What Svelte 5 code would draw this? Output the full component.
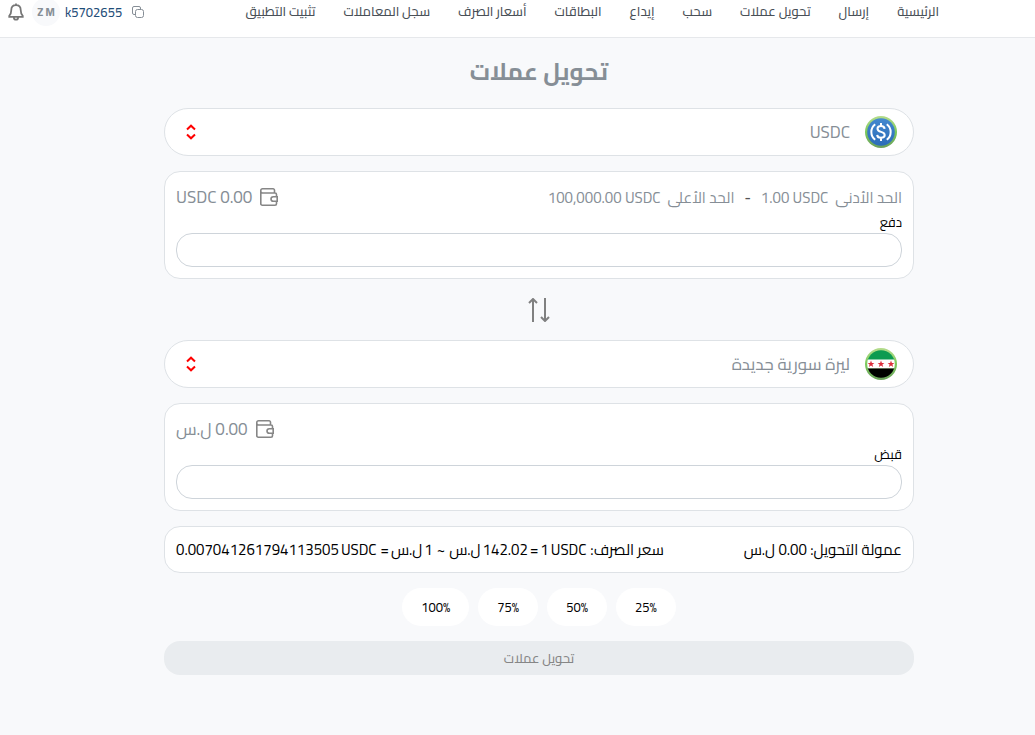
<script>
  const links = [
    'الرئيسية',
    'إرسال',
    'تحويل عملات',
    'سحب',
    'إيداع',
    'البطاقات',
    'أسعار الصرف',
    'سجل المعاملات',
    'تثبيت التطبيق',
  ];
  const shares = [25, 50, 75, 100];

  let from = $state('usdc');
  let to = $state('syp');
  let pay = $state('');
  let receive = $state('');

  const swap = () => {
    [from, to] = [to, from];
    [pay, receive] = [receive, pay];
  };
</script>

{#snippet coin(id, slot)}
  <svg class="coin" viewBox="0 0 32 32" aria-hidden="true">
    <defs>
      <linearGradient id="ring-{slot}" x1="0" y1="0" x2="0" y2="1">
        <stop offset="0" stop-color="#b5dc8d" />
        <stop offset="0.5" stop-color="#7cc95c" />
        <stop offset="1" stop-color="#6a9f5c" />
      </linearGradient>
      <linearGradient id="blue-{slot}" x1="0" y1="0" x2="0" y2="1">
        <stop offset="0" stop-color="#4489cf" />
        <stop offset="1" stop-color="#2b6cb8" />
      </linearGradient>
      <clipPath id="disc-{slot}"><circle cx="16" cy="16" r="13.8" /></clipPath>
    </defs>
    <circle cx="16" cy="16" r="16" fill="url(#ring-{slot})" />
    {#if id === 'usdc'}
      <circle cx="16" cy="16" r="13.8" fill="url(#blue-{slot})" />
      <g fill="none" stroke="#fff" stroke-width="2">
        <path d="M10.200 8.200a9.800 9.800 0 0 0 0 15.600M21.800 8.200a9.800 9.800 0 0 1 0 15.600" />
        <path d="M19.600 12.800c-.2-1.900-1.600-2.700-3.600-2.700s-3.500.9-3.500 2.700c0 4.300 7.200 1.900 7.200 6.200 0 1.900-1.600 2.800-3.700 2.800-2.200 0-3.700-1-3.800-2.900M16 7v3M16 21.800v3.200" />
      </g>
    {:else}
      <g clip-path="url(#disc-{slot})">
        <path d="M0 0h32v12H0z" fill="#0c9b50" />
        <path d="M0 11.500h32v9H0z" fill="#fff" />
        <path d="M0 20.500h32V32H0z" fill="#000" />
        {#each [6, 16, 26] as x}
          <path
            transform="translate({x} 16)"
            d="M0-3.400 .9-1h2.500L1.400.6l.8 2.500L0 1.600l-2.200 1.500.8-2.500L-3.400-1h2.500z"
            fill="#dc2f3c"
          />
        {/each}
      </g>
    {/if}
  </svg>
{/snippet}

{#snippet chevrons()}
  <svg class="chevrons" viewBox="0 0 12 16" aria-hidden="true">
    <path d="M2 5.500 6 1.700l4 3.800M2 10.500l4 3.800 4-3.800" />
  </svg>
{/snippet}

{#snippet wallet()}
  <svg class="wallet" viewBox="0 0 18 18" aria-hidden="true">
    <path d="M14.500 5V2.200A1.400 1.400 0 0 0 13.100.8H2.500A1.700 1.700 0 0 0 .8 2.500v13.200A1.500 1.500 0 0 0 2.300 17.200H15a1.500 1.500 0 0 0 1.500-1.500V13.500M.8 3.200A1.800 1.800 0 0 0 2.600 5H15a1.500 1.500 0 0 1 1.500 1.500V8.500M17.200 8.700H13.300a2.300 2.300 0 0 0 0 4.600H17.200z" />
  </svg>
{/snippet}

<header>
  <nav>
    {#each links as link}
      <a href="#top">{link}</a>
    {/each}
  </nav>
  <div class="account">
    <button aria-label="نسخ">
      <svg class="copy" viewBox="0 0 12 12" aria-hidden="true">
        <rect x="3.500" y="3.500" width="8" height="8" rx="2" />
        <path d="M8.500 3.500V2a1.500 1.500 0 0 0-1.500-1.500H2A1.500 1.500 0 0 0 .5 2v5A1.500 1.500 0 0 0 2 8.500h1.500" />
      </svg>
    </button>
    <span class="user">k5702655</span>
    <span class="avatar">Z M</span>
    <button aria-label="الإشعارات">
      <svg class="bell" viewBox="0 0 18 20" aria-hidden="true">
        <path d="M9 2.300c-3.300 0-5.300 2.400-5.300 5.500 0 4.200-1 5.300-2.300 6.500v1.200h15.200v-1.200c-1.300-1.200-2.300-2.300-2.300-6.500 0-3.100-2-5.500-5.300-5.500zM9 .5v1.800M6.500 16c.2 1.700 1.200 2.700 2.500 2.700s2.300-1 2.500-2.700" />
      </svg>
    </button>
  </div>
</header>

<main>
  <h1>تحويل عملات</h1>

  <div class="picker">
    {@render coin(from, 'from')}
    <select bind:value={from} aria-label="من عملة">
      <option value="usdc">USDC</option>
      <option value="syp">ليرة سورية جديدة</option>
    </select>
    {@render chevrons()}
  </div>

  <section class="card">
    <div class="info">
      <p class="limits">
        <span>الحد الأدنى</span>
        <bdi>1.00 USDC</bdi>
        <span class="dash">-</span>
        <span>الحد الأعلى</span>
        <bdi>100,000.00 USDC</bdi>
      </p>
      <p class="balance">{@render wallet()}<span>0.00 USDC</span></p>
    </div>
    <label for="pay">دفع</label>
    <input id="pay" type="text" inputmode="decimal" bind:value={pay} />
  </section>

  <button class="swap" aria-label="تبديل" onclick={swap}>
    <svg viewBox="0 0 22 24" aria-hidden="true">
      <path d="M5 24V1M1 5l4-4 4 4M17 0v23M13 19l4 4 4-4" />
    </svg>
  </button>

  <div class="picker">
    {@render coin(to, 'to')}
    <select bind:value={to} aria-label="إلى عملة">
      <option value="usdc">USDC</option>
      <option value="syp">ليرة سورية جديدة</option>
    </select>
    {@render chevrons()}
  </div>

  <section class="card">
    <div class="info">
      <p class="balance last">{@render wallet()}<span>0.00 ل.س</span></p>
    </div>
    <label for="receive">قبض</label>
    <input id="receive" type="text" inputmode="decimal" bind:value={receive} />
  </section>

  <section class="card rates">
    <p>عمولة التحويل: 0.00 ل.س</p>
    <!-- each piece is its own flex item so the bidi order stays put -->
    <p class="rate">
      <span>سعر الصرف:</span>
      <bdi class="amount"><span>1</span><span>USDC</span></bdi>
      <span>=</span>
      <span>142.02</span>
      <span>ل.س</span>
      <span class="about">~</span>
      <span>1</span>
      <span>ل.س</span>
      <span>=</span>
      <bdi class="amount"><span>0.007041261794113505</span><span>USDC</span></bdi>
    </p>
  </section>

  <div class="shares">
    {#each shares as share}
      <button dir="ltr">{share}%</button>
    {/each}
  </div>

  <button class="submit" disabled>تحويل عملات</button>
</main>

<style>
  :global(body) {
    background: #f8f9fb;
    color: #000;
    direction: rtl;
    font-family: Cairo, Roboto, 'DejaVu Sans', sans-serif;
    font-size: 15px;
  }

  p, h1 { margin: 0; }

  button {
    border: 0;
    padding: 0;
    background: none;
    font-family: inherit;
    cursor: pointer;
  }

  svg {
    display: block;
    flex: none;
    fill: none;
  }

  header {
    display: flex;
    justify-content: space-between;
    padding: 0 96px 13px 8px;
    border-bottom: 1px solid #e6e8eb;
    background: #fff;
  }

  nav {
    display: flex;
    gap: 28px;
  }
  nav a {
    color: #495057;
    font-size: 13px;
    font-weight: 500;
    line-height: 22px;
    text-decoration: none;
    white-space: nowrap;
  }

  .account {
    display: flex;
    align-items: center;
    height: 24px;
  }
  .user {
    margin: 0 10px 0 5px;
    color: #1f4e79;
    font-size: 13px;
    font-weight: 500;
  }
  .avatar {
    display: grid;
    place-items: center;
    width: 28px;
    height: 28px;
    margin-left: 8px;
    border-radius: 50%;
    background: #f8f9fb;
    color: #868e96;
    font-size: 11px;
    font-weight: 700;
  }
  .copy {
    width: 12px;
    height: 12px;
    stroke: #868e96;
  }
  .bell {
    width: 16px;
    height: 20px;
    stroke: #777;
    stroke-width: 2;
  }

  main {
    display: flex;
    flex-direction: column;
    gap: 15px;
    padding: 15px 121px 60px 164px;
  }

  h1 {
    padding-bottom: 2px;
    color: #868e96;
    font-size: 24px;
    font-weight: 700;
    line-height: 38px;
    text-align: center;
  }

  .picker, .card {
    box-sizing: border-box;
    border: 1px solid #dee2e6;
    background: #fff;
  }

  .picker {
    display: flex;
    align-items: center;
    gap: 15px;
    height: 48px;
    padding: 0 16px 0 20px;
    border-radius: 24px;
  }
  .picker select {
    flex: 1;
    height: 40px;
    border: 0;
    padding: 0;
    appearance: none;
    background: none;
    color: #868e96;
    font-family: inherit;
    font-size: 17px;
  }
  .coin {
    width: 32px;
    height: 32px;
  }
  .chevrons {
    width: 12px;
    height: 16px;
    stroke: #f00;
    stroke-width: 2;
  }

  .card {
    display: flex;
    flex-direction: column;
    padding: 11px;
    border-radius: 16px;
  }

  .info {
    display: flex;
    justify-content: space-between;
    align-items: center;
    height: 28px;
    color: #868e96;
  }
  .limits {
    display: flex;
    align-items: center;
    gap: 7px;
  }
  .dash {
    margin: 0 3px;
    color: #555;
    font-weight: 600;
  }
  .balance {
    display: flex;
    align-items: center;
    gap: 8px;
    font-size: 17px;
  }
  .balance.last { margin-right: auto; }
  .wallet {
    width: 18px;
    height: 18px;
    stroke: #868686;
    stroke-width: 1.6;
  }

  label {
    font-size: 13px;
    line-height: 22px;
  }

  input {
    box-sizing: border-box;
    width: 100%;
    height: 34px;
    border: 1px solid #ced4da;
    border-radius: 16px;
    padding: 0 12px;
    background: #fff;
    font-family: inherit;
    font-size: 15px;
  }

  .swap {
    align-self: center;
    height: 31px;
  }
  .swap svg {
    width: 22px;
    height: 24px;
    stroke: #808080;
    stroke-width: 2;
  }

  .rates {
    flex-direction: row;
    justify-content: space-between;
    align-items: center;
    height: 47px;
    white-space: nowrap;
  }
  .rate, .amount {
    display: flex;
    gap: 2px;
  }
  .amount {
    margin-right: 2px;
    direction: ltr;
  }
  .about { margin: 0 2px; }

  .shares {
    display: flex;
    justify-content: center;
    gap: 9px;
  }
  .shares button {
    height: 38px;
    padding: 0 19px;
    border-radius: 19px;
    background: #fff;
    color: #000;
    font-size: 13px;
  }

  .submit {
    height: 34px;
    border-radius: 16px;
    background: #e9ecef;
    color: #868686;
    font-size: 13px;
    font-weight: 500;
  }
</style>
